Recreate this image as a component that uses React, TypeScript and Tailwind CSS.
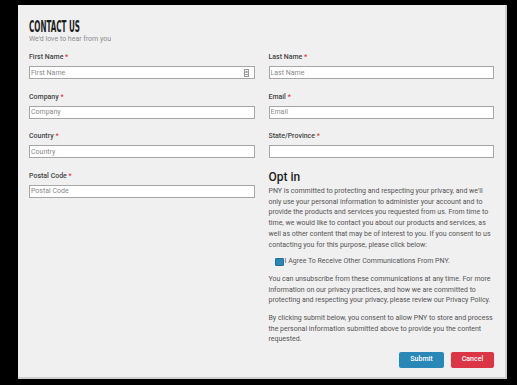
import React from "react";

const font = { fontFamily: "Roboto, 'Noto Sans', Arial, sans-serif" };

function Field({
  label,
  placeholder,
  required = true,
  icon = false,
}: {
  label: string;
  placeholder?: string;
  required?: boolean;
  icon?: boolean;
}) {
  return (
    <div className="flex flex-col">
      <label className="text-[7px] leading-[10px] font-medium text-[#454545]">
        {label}
        {required && <span className="text-[#e0383e]"> *</span>}
      </label>
      <div className="relative mt-[4px]">
        <input
          className="block w-full h-[13px] px-[1px] bg-white border border-[#a6a6a6] text-[7px] leading-[11px] text-[#333] placeholder:text-[#8a8a8a] outline-none"
          placeholder={placeholder}
        />
        {icon && (
          <svg
            className="absolute right-[6px] top-[2.5px]"
            width="5"
            height="8"
            viewBox="0 0 5 8"
          >
            <rect x="0.5" y="0.5" width="4" height="7" fill="none" stroke="#9a9a9a" strokeWidth="1" />
            <rect x="1.5" y="2" width="2" height="2" fill="#9a9a9a" />
            <line x1="1" y1="5.5" x2="4" y2="5.5" stroke="#9a9a9a" strokeWidth="1" />
          </svg>
        )}
      </div>
    </div>
  );
}

export default function App() {
  return (
    <div className="w-[517px] h-[385px] bg-black pt-[5px] pl-[18px]" style={font}>
      <div className="w-[489px] h-[374px] bg-[#f0f0f0] border-r-2 border-b-2 border-[#cfcfcf] px-[11px] pt-[10px]">
        {/* Header */}
        <div className="h-[17px]">
          <h1
            className="inline-block origin-left scale-x-[0.5] text-[16px] leading-[17px] font-bold text-[#1d1d1d] whitespace-nowrap"
            style={{ fontFamily: "'DejaVu Sans Condensed', 'DejaVu Sans', sans-serif" }}
          >
            CONTACT US
          </h1>
        </div>
        <p className="mt-[2px] text-[7px] leading-[10px] text-[#8c8c8c]">We'd love to hear from you</p>

        <div className="mt-[8px] grid grid-cols-2 gap-x-[14px]">
          {/* Left column */}
          <div className="flex flex-col gap-[12.5px]">
            <Field label="First Name" placeholder="First Name" icon />
            <Field label="Company" placeholder="Company" />
            <Field label="Country" placeholder="Country" />
            <Field label="Postal Code" placeholder="Postal Code" />
          </div>

          {/* Right column */}
          <div className="flex flex-col">
            <div className="flex flex-col gap-[12.5px]">
              <Field label="Last Name" placeholder="Last Name" />
              <Field label="Email" placeholder="Email" />
              <Field label="State/Province" />
            </div>

            <h2 className="mt-[11.5px] text-[12px] leading-[14px] font-medium text-[#1f1f1f]">Opt in</h2>
            <p className="mt-[2.5px] text-[7px] leading-[10.7px] text-[#555]">
              PNY is committed to protecting and respecting your privacy, and we'll only use your
              personal information to administer your account and to provide the products and
              services you requested from us. From time to time, we would like to contact you about
              our products and services, as well as other content that may be of interest to you. If
              you consent to us contacting you for this purpose, please click below:
            </p>

            <label className="mt-[6px] flex items-center pl-[6px] text-[7px] leading-[10.7px] text-[#555]">
              <span className="w-[9px] h-[8px] bg-[#2a88b9] border border-[#1f6f99] rounded-[1px] shrink-0" />
              <span className="ml-[1px]">I Agree To Receive Other Communications From PNY.</span>
            </label>

            <p className="mt-[7px] text-[7px] leading-[10.7px] text-[#555]">
              You can unsubscribe from these communications at any time. For more information on
              our privacy practices, and how we are committed to protecting and respecting your
              privacy, please review our Privacy Policy.
            </p>
            <p className="mt-[7px] text-[7px] leading-[10.7px] text-[#555]">
              By clicking submit below, you consent to allow PNY to store and process the personal
              information submitted above to provide you the content requested.
            </p>

            <div className="mt-[6.5px] flex justify-end gap-[7px]">
              <button className="w-[45px] h-[16px] rounded-[2px] bg-[#2a88b8] text-white text-[7px] font-medium">
                Submit
              </button>
              <button className="w-[43px] h-[16px] rounded-[2px] bg-[#dc3545] text-white text-[7px] font-medium">
                Cancel
              </button>
            </div>
          </div>
        </div>
      </div>
    </div>
  );
}
